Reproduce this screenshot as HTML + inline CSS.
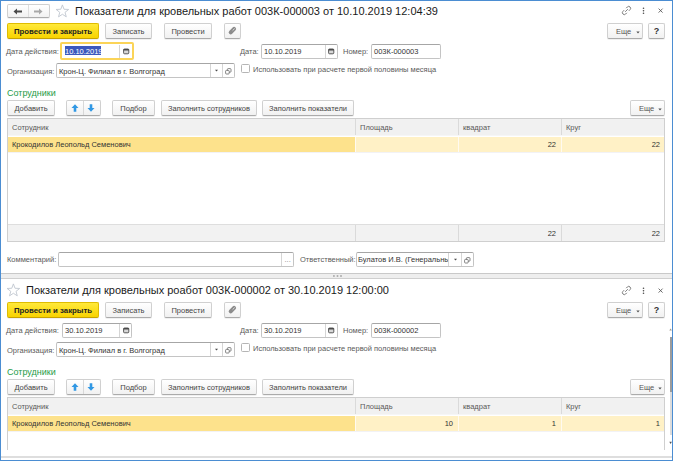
<!DOCTYPE html>
<html><head><meta charset="utf-8">
<style>
html,body{margin:0;padding:0;}
body{width:673px;height:461px;overflow:hidden;background:#fff;position:relative;font-family:"Liberation Sans",sans-serif;font-size:7.5px;color:#333;}
.a{position:absolute;}
.frame{left:0;top:0;width:671px;height:459px;border:1px solid #4b8dd2;}
.t{position:absolute;white-space:nowrap;line-height:10px;}
.btn{position:absolute;box-sizing:border-box;border:1px solid #d0d0d0;border-bottom-color:#ababab;border-radius:2px;background:linear-gradient(#ffffff,#f1f1f1);box-shadow:0 1px 0 rgba(0,0,0,0.06);color:#444;text-align:center;line-height:15px;white-space:nowrap;}
.ybtn{background:linear-gradient(#ffe93a,#f8d300);border-color:#dfbc00;border-bottom-color:#c7a300;color:#222;font-weight:bold;font-size:7.8px;}
.inp{position:absolute;box-sizing:border-box;border:1px solid #c4c4c4;border-top-color:#a6a6a6;border-radius:2px;background:#fff;}
.lbl{position:absolute;white-space:nowrap;color:#595959;line-height:10px;}
.val{position:absolute;white-space:nowrap;color:#333;line-height:10px;}
.vd{position:absolute;top:1px;bottom:1px;width:1px;background:#dcdcdc;}
.tw{position:absolute;white-space:nowrap;font-size:11px;line-height:11px;color:#1a1a1a;transform-origin:0 0;}
.grn{color:#259b48;font-size:9px;}
.tbl{position:absolute;box-sizing:border-box;border:1px solid #cfcfcf;background:#fff;overflow:hidden;}
.hd{position:absolute;left:0;right:0;top:0;height:16px;background:#f1f1f1;border-bottom:1px solid #f6f6f6;}
.row{position:absolute;left:0;right:0;height:15px;background:#fff1c6;border-bottom:1px solid #f2f2f5;}
.cd{position:absolute;top:0;bottom:0;width:1px;background:#dadada;}
.rcd{position:absolute;width:1px;background:#fff;}
.ft{position:absolute;left:0;right:0;height:17px;background:#f2f2f2;border-top:1px solid #dedede;}
</style></head><body>
<div class="a frame"></div>

<!-- ============ WINDOW 1 ============ -->
<!-- nav -->
<div class="btn" style="left:7px;top:4px;width:43px;height:14px;"></div>
<div class="a" style="left:28px;top:5px;width:1px;height:12px;background:#dedede"></div>
<svg class="a" style="left:13px;top:8px" width="10" height="7" viewBox="0 0 10 7"><path d="M0.5 3.5 L4 0.5 L4 2.5 L9 2.5 L9 4.5 L4 4.5 L4 6.5 Z" fill="#4a4a4a"/></svg>
<svg class="a" style="left:33px;top:8px" width="10" height="7" viewBox="0 0 10 7"><path d="M9.5 3.5 L6 0.5 L6 2.5 L1 2.5 L1 4.5 L6 4.5 L6 6.5 Z" fill="#a8a8a8"/></svg>
<!-- star -->
<svg class="a" style="left:55px;top:4px" width="15" height="14" viewBox="0 0 15 14"><path d="M7.40 0.90 L9.02 5.28 L13.68 5.46 L10.02 8.35 L11.28 12.84 L7.40 10.25 L3.52 12.84 L4.78 8.35 L1.12 5.46 L5.78 5.28 Z" fill="none" stroke="#bfc6cf" stroke-width="0.9" stroke-linejoin="round"/></svg>
<div class="tw" style="left:75px;top:5.6px;">Показатели для кровельных работ 003К-000003 от 10.10.2019 12:04:39</div>
<!-- right icons -->
<svg class="a" style="left:621px;top:5px" width="11" height="11" viewBox="0 0 11 11"><g fill="none" stroke="#707070" stroke-width="0.85" transform="rotate(-45 5.5 5.5)"><path d="M4.1 3.6 H2.4 A1.9 1.9 0 0 0 2.4 7.4 H4.1"/><path d="M6.9 3.6 H8.6 A1.9 1.9 0 0 1 8.6 7.4 H6.9"/><path d="M3.6 5.5 H7.4"/></g></svg>
<svg class="a" style="left:642px;top:7px" width="3" height="8" viewBox="0 0 3 8"><g fill="#4a4a4a"><circle cx="1.5" cy="1.2" r="0.8"/><circle cx="1.5" cy="3.7" r="0.8"/><circle cx="1.5" cy="6.2" r="0.8"/></g></svg>
<svg class="a" style="left:657px;top:7px" width="7" height="7" viewBox="0 0 7 7"><path d="M1.6 1.6 L5.6 5.6 M5.6 1.6 L1.6 5.6" stroke="#555" stroke-width="0.85"/></svg>

<!-- command bar -->
<div class="btn ybtn" style="left:7px;top:23px;width:92px;height:16px;">Провести и закрыть</div>
<div class="btn" style="left:105px;top:23px;width:47px;height:16px;">Записать</div>
<div class="btn" style="left:164px;top:23px;width:48px;height:16px;">Провести</div>
<div class="btn" style="left:224px;top:23px;width:17px;height:16px;"></div>
<svg class="a" style="left:227px;top:26px" width="11" height="10" viewBox="0 0 11 10"><path d="M3.7 6.4 L7.1 2.9" stroke="#8c8c8c" stroke-width="4" stroke-linecap="round"/><path d="M5.9 4.3 L7.4 2.8" stroke="#e4e4e4" stroke-width="0.9" stroke-linecap="round"/></svg>
<div class="btn" style="left:607px;top:23px;width:36px;height:16px;text-align:left;padding-left:8px;color:#555">Еще<svg class="a" style="left:28px;top:7px" width="4" height="3" viewBox="0 0 4 3"><path d="M0.3 0.6 L3.7 0.6 L2 2.5 Z" fill="#555"/></svg></div>
<div class="btn" style="left:648px;top:23px;width:17px;height:16px;font-weight:bold;color:#333;font-size:9px">?</div>

<!-- row: дата действия -->
<div class="lbl" style="left:6px;top:47px;">Дата действия:</div>
<div class="a" style="left:60px;top:42px;width:70px;height:14px;border:2px solid #fbd458;border-radius:2px;background:#fff;"></div>
<div class="a" style="left:119px;top:45px;width:1px;height:13px;background:#d5d5d5"></div>
<div class="a" style="left:65px;top:46px;height:9px;width:36px;background:#3b58bd;"></div>
<div class="val" style="left:65px;top:47px;color:#fff;">10.10.2019</div>
<svg class="a" style="left:122.5px;top:47.5px" width="7" height="7" viewBox="0 0 7 7"><rect x="0.6" y="1" width="5.2" height="4.8" rx="0.9" fill="#d8d8d8" stroke="#4a4a4a" stroke-width="0.9"/><rect x="0.6" y="1" width="5.2" height="1.5" fill="#4a4a4a"/></svg>

<div class="lbl" style="left:240px;top:47px;">Дата:</div>
<div class="inp" style="left:261px;top:44px;width:77px;height:15px;"></div>
<div class="a" style="left:325px;top:45px;width:1px;height:13px;background:#d5d5d5"></div>
<div class="val" style="left:264px;top:47px;">10.10.2019</div>
<svg class="a" style="left:327.5px;top:47.5px" width="7" height="7" viewBox="0 0 7 7"><rect x="0.6" y="1" width="5.2" height="4.8" rx="0.9" fill="#d8d8d8" stroke="#4a4a4a" stroke-width="0.9"/><rect x="0.6" y="1" width="5.2" height="1.5" fill="#4a4a4a"/></svg>

<div class="lbl" style="left:343px;top:47px;">Номер:</div>
<div class="inp" style="left:371px;top:44px;width:70px;height:15px;"></div>
<div class="val" style="left:374px;top:47px;">003К-000003</div>

<!-- организация -->
<div class="lbl" style="left:7px;top:67px;">Организация:</div>
<div class="inp" style="left:56px;top:63px;width:179px;height:15px;"></div>
<div class="a" style="left:210px;top:64px;width:1px;height:13px;background:#d5d5d5"></div>
<div class="a" style="left:222px;top:64px;width:1px;height:13px;background:#d5d5d5"></div>
<div class="val" style="left:59px;top:66.5px;">Крон-Ц. Филиал в г. Волгоград</div>
<svg class="a" style="left:214px;top:69px" width="5" height="3" viewBox="0 0 5 3"><path d="M1 0.7 L4 0.7 L2.5 2.4 Z" fill="#4a4a4a"/></svg>
<svg class="a" style="left:225px;top:67.5px" width="7" height="7" viewBox="0 0 7 7"><g fill="none" stroke="#666" stroke-width="0.8"><rect x="2.4" y="0.6" width="3.6" height="3.6" rx="0.8"/><rect x="0.6" y="2.4" width="3.6" height="3.6" rx="0.8" fill="#fff"/></g></svg>
<div class="a" style="left:241px;top:64px;width:7px;height:7px;border:1px solid #b5b5b5;border-radius:1.5px;background:#fff"></div>
<div class="lbl" style="left:253px;top:65px;">Использовать при расчете первой половины месяца</div>

<!-- сотрудники -->
<div class="t grn" style="left:7px;top:88px;">Сотрудники</div>
<div class="btn" style="left:7px;top:100px;width:48px;height:16px;">Добавить</div>
<div class="btn" style="left:66px;top:100px;width:35px;height:16px;"></div>
<div class="a" style="left:83px;top:101px;width:1px;height:14px;background:#d8d8d8"></div>
<svg class="a" style="left:71px;top:104px" width="8" height="8" viewBox="0 0 8 8"><path d="M4 0.3 L7.5 4 L5.3 4 L5.3 7.7 L2.7 7.7 L2.7 4 L0.5 4 Z" fill="#3198e4"/></svg>
<svg class="a" style="left:87px;top:104px" width="8" height="8" viewBox="0 0 8 8"><path d="M4 7.7 L7.5 4 L5.3 4 L5.3 0.3 L2.7 0.3 L2.7 4 L0.5 4 Z" fill="#3198e4"/></svg>
<div class="btn" style="left:112px;top:100px;width:43px;height:16px;">Подбор</div>
<div class="btn" style="left:161px;top:100px;width:96px;height:16px;">Заполнить сотрудников</div>
<div class="btn" style="left:262px;top:100px;width:92px;height:16px;">Заполнить показатели</div>
<div class="btn" style="left:630px;top:100px;width:35px;height:16px;text-align:left;padding-left:8px;color:#555">Еще<svg class="a" style="left:27px;top:7px" width="4" height="3" viewBox="0 0 4 3"><path d="M0.3 0.6 L3.7 0.6 L2 2.5 Z" fill="#555"/></svg></div>

<!-- table 1 -->
<div class="tbl" style="left:7px;top:118px;width:658px;height:124px;">
  <div class="hd"></div>
  <div class="cd" style="left:347px;top:0;height:16px;"></div>
  <div class="cd" style="left:450px;top:0;height:16px;"></div>
  <div class="cd" style="left:553px;top:0;height:16px;"></div>
  <div class="lbl" style="left:4px;top:4px;">Сотрудник</div>
  <div class="lbl" style="left:352px;top:4px;">Площадь</div>
  <div class="lbl" style="left:455px;top:4px;">квадрат</div>
  <div class="lbl" style="left:558px;top:4px;">Круг</div>
  <div class="row" style="top:18px;"></div>
  <div class="a" style="left:0;top:18px;width:347px;height:15px;background:#fde28c"></div><div class="a" style="left:347px;top:18px;width:1px;height:15px;background:#fffaf0"></div><div class="a" style="left:450px;top:18px;width:1px;height:15px;background:#fffaf0"></div><div class="a" style="left:553px;top:18px;width:1px;height:15px;background:#fffaf0"></div>
  <div class="val" style="left:4px;top:21px;">Крокодилов Леопольд Семенович</div>
  <div class="val" style="left:451px;top:21px;width:97px;text-align:right">22</div>
  <div class="val" style="left:554px;top:21px;width:98px;text-align:right">22</div>
  <div class="ft" style="top:105px;"></div>
  <div class="cd" style="left:347px;top:106px;height:17px;"></div>
  <div class="cd" style="left:450px;top:106px;height:17px;"></div>
  <div class="cd" style="left:553px;top:106px;height:17px;"></div>
  <div class="val" style="left:451px;top:110px;width:97px;text-align:right">22</div>
  <div class="val" style="left:554px;top:110px;width:98px;text-align:right">22</div>
</div>

<!-- comment row -->
<div class="lbl" style="left:7px;top:255px;">Комментарий:</div>
<div class="inp" style="left:58px;top:252px;width:236px;height:15px;"></div>
<div class="a" style="left:281px;top:253px;width:1px;height:13px;background:#d5d5d5"></div>
<div class="t" style="left:284.5px;top:255px;color:#888">...</div>
<div class="lbl" style="left:300px;top:255px;">Ответственный:</div>
<div class="inp" style="left:356px;top:252px;width:118px;height:15px;overflow:hidden"><div class="val" style="left:1px;top:2px;width:91px;overflow:hidden">Булатов И.В. (Генеральный директор)</div></div>
<div class="a" style="left:448px;top:253px;width:1px;height:13px;background:#d5d5d5"></div>
<div class="a" style="left:461px;top:253px;width:1px;height:13px;background:#d5d5d5"></div>
<svg class="a" style="left:453px;top:258px" width="5" height="3" viewBox="0 0 5 3"><path d="M1 0.7 L4 0.7 L2.5 2.4 Z" fill="#4a4a4a"/></svg>
<svg class="a" style="left:464px;top:256.5px" width="7" height="7" viewBox="0 0 7 7"><g fill="none" stroke="#666" stroke-width="0.8"><rect x="2.4" y="0.6" width="3.6" height="3.6" rx="0.8"/><rect x="0.6" y="2.4" width="3.6" height="3.6" rx="0.8" fill="#fff"/></g></svg>

<!-- splitter -->
<div class="a" style="left:1px;top:273px;width:671px;height:4px;background:#eeeeee;border-top:1px solid #c9c9c9;border-bottom:1px solid #cfcfcf;"></div>
<svg class="a" style="left:332px;top:274px" width="11" height="4" viewBox="0 0 11 4"><g fill="#aaa"><rect x="1.1" y="1.1" width="1.6" height="1.8"/><rect x="4.7" y="1.1" width="1.6" height="1.8"/><rect x="8.2" y="1.1" width="1.6" height="1.8"/></g></svg>

<!-- ============ WINDOW 2 ============ -->
<svg class="a" style="left:6px;top:283px" width="15" height="14" viewBox="0 0 15 14"><path d="M7.40 0.90 L9.02 5.28 L13.68 5.46 L10.02 8.35 L11.28 12.84 L7.40 10.25 L3.52 12.84 L4.78 8.35 L1.12 5.46 L5.78 5.28 Z" fill="none" stroke="#bfc6cf" stroke-width="0.9" stroke-linejoin="round"/></svg>
<div class="tw" style="left:26px;top:285px;">Покзатели для кровельных роабот 003К-000002 от 30.10.2019 12:00:00</div>
<svg class="a" style="left:621px;top:285px" width="11" height="11" viewBox="0 0 11 11"><g fill="none" stroke="#707070" stroke-width="0.85" transform="rotate(-45 5.5 5.5)"><path d="M4.1 3.6 H2.4 A1.9 1.9 0 0 0 2.4 7.4 H4.1"/><path d="M6.9 3.6 H8.6 A1.9 1.9 0 0 1 8.6 7.4 H6.9"/><path d="M3.6 5.5 H7.4"/></g></svg>
<svg class="a" style="left:642px;top:287px" width="3" height="8" viewBox="0 0 3 8"><g fill="#4a4a4a"><circle cx="1.5" cy="1.2" r="0.8"/><circle cx="1.5" cy="3.7" r="0.8"/><circle cx="1.5" cy="6.2" r="0.8"/></g></svg>
<svg class="a" style="left:657px;top:287px" width="7" height="7" viewBox="0 0 7 7"><path d="M1.6 1.6 L5.6 5.6 M5.6 1.6 L1.6 5.6" stroke="#555" stroke-width="0.85"/></svg>

<div class="btn ybtn" style="left:7px;top:302px;width:92px;height:16px;">Провести и закрыть</div>
<div class="btn" style="left:105px;top:302px;width:47px;height:16px;">Записать</div>
<div class="btn" style="left:164px;top:302px;width:48px;height:16px;">Провести</div>
<div class="btn" style="left:224px;top:302px;width:17px;height:16px;"></div>
<svg class="a" style="left:227px;top:305px" width="11" height="10" viewBox="0 0 11 10"><path d="M3.7 6.4 L7.1 2.9" stroke="#8c8c8c" stroke-width="4" stroke-linecap="round"/><path d="M5.9 4.3 L7.4 2.8" stroke="#e4e4e4" stroke-width="0.9" stroke-linecap="round"/></svg>
<div class="btn" style="left:607px;top:302px;width:36px;height:16px;text-align:left;padding-left:8px;color:#555">Еще<svg class="a" style="left:28px;top:7px" width="4" height="3" viewBox="0 0 4 3"><path d="M0.3 0.6 L3.7 0.6 L2 2.5 Z" fill="#555"/></svg></div>
<div class="btn" style="left:648px;top:302px;width:17px;height:16px;font-weight:bold;color:#333;font-size:9px">?</div>

<div class="lbl" style="left:6px;top:326px;">Дата действия:</div>
<div class="inp" style="left:62px;top:323px;width:70px;height:15px;"></div>
<div class="a" style="left:119px;top:324px;width:1px;height:13px;background:#d5d5d5"></div>
<div class="val" style="left:65px;top:326px;">30.10.2019</div>
<svg class="a" style="left:122.5px;top:326.5px" width="7" height="7" viewBox="0 0 7 7"><rect x="0.6" y="1" width="5.2" height="4.8" rx="0.9" fill="#d8d8d8" stroke="#4a4a4a" stroke-width="0.9"/><rect x="0.6" y="1" width="5.2" height="1.5" fill="#4a4a4a"/></svg>

<div class="lbl" style="left:240px;top:326px;">Дата:</div>
<div class="inp" style="left:261px;top:323px;width:77px;height:15px;"></div>
<div class="a" style="left:325px;top:324px;width:1px;height:13px;background:#d5d5d5"></div>
<div class="val" style="left:264px;top:326px;">30.10.2019</div>
<svg class="a" style="left:327.5px;top:326.5px" width="7" height="7" viewBox="0 0 7 7"><rect x="0.6" y="1" width="5.2" height="4.8" rx="0.9" fill="#d8d8d8" stroke="#4a4a4a" stroke-width="0.9"/><rect x="0.6" y="1" width="5.2" height="1.5" fill="#4a4a4a"/></svg>

<div class="lbl" style="left:343px;top:326px;">Номер:</div>
<div class="inp" style="left:371px;top:323px;width:70px;height:15px;"></div>
<div class="val" style="left:374px;top:326px;">003К-000002</div>

<div class="lbl" style="left:7px;top:346px;">Организация:</div>
<div class="inp" style="left:56px;top:342px;width:179px;height:15px;"></div>
<div class="a" style="left:210px;top:343px;width:1px;height:13px;background:#d5d5d5"></div>
<div class="a" style="left:222px;top:343px;width:1px;height:13px;background:#d5d5d5"></div>
<div class="val" style="left:59px;top:346px;">Крон-Ц. Филиал в г. Волгоград</div>
<svg class="a" style="left:214px;top:348px" width="5" height="3" viewBox="0 0 5 3"><path d="M1 0.7 L4 0.7 L2.5 2.4 Z" fill="#4a4a4a"/></svg>
<svg class="a" style="left:225px;top:346.5px" width="7" height="7" viewBox="0 0 7 7"><g fill="none" stroke="#666" stroke-width="0.8"><rect x="2.4" y="0.6" width="3.6" height="3.6" rx="0.8"/><rect x="0.6" y="2.4" width="3.6" height="3.6" rx="0.8" fill="#fff"/></g></svg>
<div class="a" style="left:241px;top:343px;width:7px;height:7px;border:1px solid #b5b5b5;border-radius:1.5px;background:#fff"></div>
<div class="lbl" style="left:253px;top:344px;">Использовать при расчете первой половины месяца</div>

<div class="t grn" style="left:7px;top:366.5px;">Сотрудники</div>
<div class="btn" style="left:7px;top:379px;width:48px;height:16px;">Добавить</div>
<div class="btn" style="left:66px;top:379px;width:35px;height:16px;"></div>
<div class="a" style="left:83px;top:380px;width:1px;height:14px;background:#d8d8d8"></div>
<svg class="a" style="left:71px;top:383px" width="8" height="8" viewBox="0 0 8 8"><path d="M4 0.3 L7.5 4 L5.3 4 L5.3 7.7 L2.7 7.7 L2.7 4 L0.5 4 Z" fill="#3198e4"/></svg>
<svg class="a" style="left:87px;top:383px" width="8" height="8" viewBox="0 0 8 8"><path d="M4 7.7 L7.5 4 L5.3 4 L5.3 0.3 L2.7 0.3 L2.7 4 L0.5 4 Z" fill="#3198e4"/></svg>
<div class="btn" style="left:112px;top:379px;width:43px;height:16px;">Подбор</div>
<div class="btn" style="left:161px;top:379px;width:96px;height:16px;">Заполнить сотрудников</div>
<div class="btn" style="left:262px;top:379px;width:92px;height:16px;">Заполнить показатели</div>
<div class="btn" style="left:630px;top:379px;width:35px;height:16px;text-align:left;padding-left:8px;color:#555">Еще<svg class="a" style="left:27px;top:7px" width="4" height="3" viewBox="0 0 4 3"><path d="M0.3 0.6 L3.7 0.6 L2 2.5 Z" fill="#555"/></svg></div>

<!-- table 2 -->
<div class="tbl" style="left:7px;top:397px;width:658px;height:61px;border-bottom:none;">
  <div class="hd"></div>
  <div class="cd" style="left:347px;top:0;height:16px;"></div>
  <div class="cd" style="left:450px;top:0;height:16px;"></div>
  <div class="cd" style="left:553px;top:0;height:16px;"></div>
  <div class="lbl" style="left:4px;top:4px;">Сотрудник</div>
  <div class="lbl" style="left:352px;top:4px;">Площадь</div>
  <div class="lbl" style="left:455px;top:4px;">квадрат</div>
  <div class="lbl" style="left:558px;top:4px;">Круг</div>
  <div class="row" style="top:18px;"></div>
  <div class="a" style="left:0;top:18px;width:347px;height:15px;background:#fde28c"></div><div class="a" style="left:347px;top:18px;width:1px;height:15px;background:#fffaf0"></div><div class="a" style="left:450px;top:18px;width:1px;height:15px;background:#fffaf0"></div><div class="a" style="left:553px;top:18px;width:1px;height:15px;background:#fffaf0"></div>
  <div class="val" style="left:4px;top:21px;">Крокодилов Леопольд Семенович</div>
  <div class="val" style="left:348px;top:21px;width:97px;text-align:right">10</div>
  <div class="val" style="left:451px;top:21px;width:97px;text-align:right">1</div>
  <div class="val" style="left:554px;top:21px;width:98px;text-align:right">1</div>
</div>
<div class="a" style="left:1px;top:450px;width:671px;height:6px;background:#fff"></div>
<div class="a" style="left:1px;top:456px;width:671px;height:2px;background:#dedede"></div>
<!-- scrollbar -->
<div class="a" style="left:670px;top:337px;width:2px;height:98px;background:#dcdcdc"></div>
<div class="a" style="left:670px;top:337px;width:2px;height:55px;background:#9c9c9c"></div>
<svg class="a" style="left:669px;top:328px" width="3" height="3" viewBox="0 0 3 3"><path d="M0.3 2.6 L2.9 2.6 L1.6 0.4 Z" fill="#a09a90"/></svg>
<svg class="a" style="left:669px;top:441px" width="3" height="4" viewBox="0 0 3 4"><path d="M0.3 0.8 L2.9 0.8 L1.6 3 Z" fill="#555"/></svg>
</body></html>
